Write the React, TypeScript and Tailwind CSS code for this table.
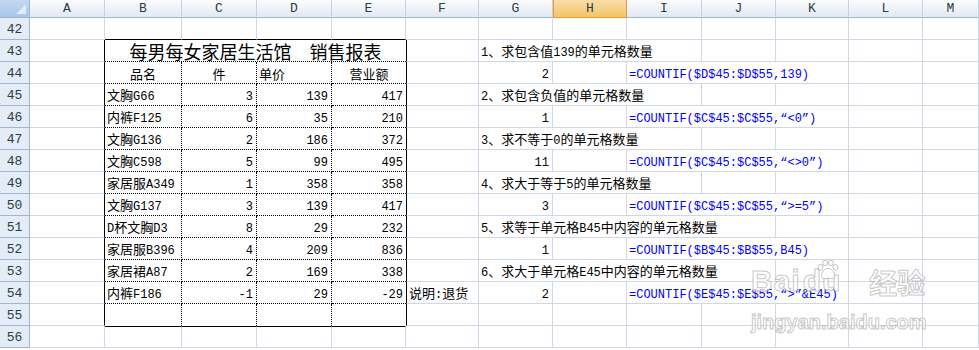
import React from "react";

const GRID =
  "grid grid-cols-[30px_75px_77px_75px_75px_74px_73px_74px_74px_75px_74px_73px_74px_1fr]";
const COLS = ["A", "B", "C", "D", "E", "F", "G", "H", "I", "J", "K", "L", "M"];
const LINE = "border-r border-b border-[#d0d7e5]";

const PRODUCTS = [
  ["文胸G66", "3", "139", "417"],
  ["内裤F125", "6", "35", "210"],
  ["文胸G136", "2", "186", "372"],
  ["文胸C598", "5", "99", "495"],
  ["家居服A349", "1", "358", "358"],
  ["文胸G137", "3", "139", "417"],
  ["D杯文胸D3", "8", "29", "232"],
  ["家居服B396", "4", "209", "836"],
  ["家居裙A87", "2", "169", "338"],
  ["内裤F186", "-1", "29", "-29"],
];

const QUESTIONS: [string, number, string, string][] = [
  ["1、求包含值139的单元格数量", 3, "2", "=COUNTIF($D$45:$D$55,139)"],
  ["2、求包含负值的单元格数量", 3, "1", "=COUNTIF($C$45:$C$55,“<0”)"],
  ["3、求不等于0的单元格数量", 3, "11", "=COUNTIF($C$45:$C$55,“<>0”)"],
  ["4、求大于等于5的单元格数量", 3, "3", "=COUNTIF($C$45:$C$55,“>=5”)"],
  ["5、求等于单元格B45中内容的单元格数量", 4, "1", "=COUNTIF($B$45:$B$55,B45)"],
  ["6、求大于单元格E45中内容的单元格数量", 4, "2", "=COUNTIF($E$45:$E$55,“>”&E45)"],
];

// latin runs get the narrow mono face, CJK stays on Noto
function Txt({ s }: { s: string }) {
  const parts = s.split(/([\x20-\x7e\u201c\u201d]+)/).filter(Boolean);
  return (
    <span>
      {parts.map((p, i) =>
        /^[\x20-\x7e\u201c\u201d]+$/.test(p) ? (
          <span key={i} className="font-['Liberation_Mono',monospace] text-[12px]">
            {p}
          </span>
        ) : (
          <span key={i}>{p}</span>
        )
      )}
    </span>
  );
}

type CellProps = {
  text?: string;
  align?: "l" | "r" | "c";
  border?: string;
  span?: 3 | 4;
  blue?: boolean;
};

function Cell({ text, align = "l", border = LINE, span, blue }: CellProps) {
  const justify =
    align === "r" ? "justify-end pr-[3px]" : align === "c" ? "justify-center" : "justify-start pl-[2px]";
  const spanCls = span === 3 ? "col-span-3" : span === 4 ? "col-span-4" : "";
  return (
    <div
      className={`flex h-[22px] items-center whitespace-nowrap pt-[2px] ${justify} ${spanCls} ${border} ${
        blue ? "text-[#0000ff]" : "text-black"
      }`}
    >
      {text && <Txt s={text} />}
    </div>
  );
}

function RowHead({ n }: { n: number }) {
  return (
    <div className="flex h-[22px] items-center justify-center border-r border-b border-[#9eb6ce] bg-[#e4ecf7] pt-[2px] font-['Liberation_Mono',monospace] text-[13px] text-[#27413e]">
      {n}
    </div>
  );
}

function Empties({ count }: { count: number }) {
  return (
    <>
      {Array.from({ length: count }).map((_, i) => (
        <Cell key={i} />
      ))}
    </>
  );
}

const A_EDGE = "border-r border-b border-r-black border-b-[#d0d7e5]";
const F_EDGE = "border-l border-r border-b border-l-black border-r-[#d0d7e5] border-b-[#d0d7e5]";
const DOT_RB = "border-r border-b border-dotted border-black";
const DOT_B = "border-b border-dotted border-black";
const WM = "text-white/75 [-webkit-text-stroke:1px_rgba(150,150,150,0.55)]";

function RightSide({ row }: { row: number }) {
  // row 43..54 → question / answer pairs
  const q = QUESTIONS[Math.floor((row - 43) / 2)];
  if (!q) return <Empties count={7} />;
  if ((row - 43) % 2 === 0) {
    return (
      <>
        <Cell text={q[0]} span={q[1] as 3 | 4} />
        <Empties count={q[1] === 3 ? 4 : 3} />
      </>
    );
  }
  return (
    <>
      <Cell text={q[2]} align="r" />
      <Cell />
      <Cell text={q[3]} span={3} blue />
      <Empties count={2} />
    </>
  );
}

export default function App() {
  const rows = Array.from({ length: 15 }, (_, i) => 42 + i);

  return (
    <div className="relative h-[350px] w-[979px] overflow-hidden bg-white font-['Noto_Sans_CJK_SC',sans-serif] text-[13px] leading-none">
      {/* column headers */}
      <div className={`${GRID} h-[18px]`}>
        <div className="relative border-r border-b border-[#9eb6ce] bg-linear-to-b from-[#c4d8f2] to-[#a9c4e9]">
          <div className="absolute right-[3px] bottom-[3px] h-0 w-0 border-l-[10px] border-l-transparent [border-bottom:10px_solid_#e6ecf3]" />
        </div>
        {COLS.map((c) =>
          c === "H" ? (
            <div
              key={c}
              className="flex items-center justify-center border-x border-b border-[#f29536] bg-linear-to-b from-[#f9dca8] to-[#f2c566] font-['Liberation_Mono',monospace] text-[13px] text-[#27413e]"
            >
              {c}
            </div>
          ) : (
            <div
              key={c}
              className="flex items-center justify-center border-r border-b border-r-[#c5d2e3] border-b-[#9eb6ce] bg-linear-to-b from-[#fafcfe] to-[#e2e9f3] font-['Liberation_Mono',monospace] text-[13px] text-[#27413e]"
            >
              {c}
            </div>
          )
        )}
      </div>

      {rows.map((r) => (
        <div key={r} className={GRID}>
          <RowHead n={r} />
          {r === 42 || r === 56 ? (
            <>
              <Cell />
              {[0, 1, 2, 3].map((k) => (
                <Cell
                  key={k}
                  border={
                    r === 42
                      ? "border-r border-b border-r-[#d0d7e5] border-b-black"
                      : "border-t border-r border-b border-t-black border-r-[#d0d7e5] border-b-[#d0d7e5]"
                  }
                />
              ))}
              <Empties count={8} />
            </>
          ) : r === 43 ? (
            <>
              <Cell border={A_EDGE} />
              <div className={`col-span-4 flex h-[22px] items-center justify-center whitespace-nowrap pt-[1px] text-[18px] ${DOT_B}`}>
                每男每女家居生活馆　销售报表
              </div>
              <Cell border={F_EDGE} />
              <RightSide row={r} />
            </>
          ) : r === 44 ? (
            <>
              <Cell border={A_EDGE} />
              <Cell text="品名" align="c" border={DOT_RB} />
              <Cell text="件" align="c" border={DOT_RB} />
              <Cell text="单价" border={DOT_RB} />
              <Cell text="营业额" align="c" border={DOT_B} />
              <Cell border={F_EDGE} />
              <RightSide row={r} />
            </>
          ) : r === 55 ? (
            <>
              <Cell border={A_EDGE} />
              <Cell border="border-r border-dotted border-black" />
              <Cell border="border-r border-dotted border-black" />
              <Cell border="border-r border-dotted border-black" />
              <Cell border="" />
              <Cell border={F_EDGE} />
              <Empties count={7} />
            </>
          ) : (
            <>
              <Cell border={A_EDGE} />
              <Cell text={PRODUCTS[r - 45][0]} border={DOT_RB} />
              <Cell text={PRODUCTS[r - 45][1]} align="r" border={DOT_RB} />
              <Cell text={PRODUCTS[r - 45][2]} align="r" border={DOT_RB} />
              <Cell text={PRODUCTS[r - 45][3]} align="r" border={DOT_B} />
              <Cell text={r === 54 ? "说明:退货" : undefined} border={F_EDGE} />
              <RightSide row={r} />
            </>
          )}
        </div>
      ))}

      {/* baidu jingyan watermark */}
      <div className="pointer-events-none absolute top-[266px] left-[751px] select-none">
        <div className="flex items-end">
          <div className={`relative font-['Liberation_Sans',sans-serif] text-[30px] font-bold leading-none tracking-[1px] ${WM}`}>
            <span>Bai</span>
            <span className="ml-[2px]">du</span>
            <svg
              className="absolute top-[-6px] left-[64px] h-[20px] w-[26px]"
              viewBox="0 0 30 24"
              fill="rgba(255,255,255,0.8)"
              stroke="rgba(150,150,150,0.55)"
              strokeWidth="1.2"
            >
              <ellipse cx="6" cy="9" rx="3" ry="3.6" />
              <ellipse cx="11.5" cy="3.6" rx="3" ry="3.3" />
              <ellipse cx="18.5" cy="3.6" rx="3" ry="3.3" />
              <ellipse cx="24" cy="9" rx="3" ry="3.6" />
              <path d="M15 10 C11 10 7 15 7 19 C7 22 10 23 15 22 C20 23 23 22 23 19 C23 15 19 10 15 10 Z" />
            </svg>
          </div>
          <span className={`ml-[28px] text-[28px] font-bold leading-none ${WM}`}>经验</span>
        </div>
        <div className={`mt-[16px] font-['Liberation_Sans',sans-serif] text-[20px] font-bold leading-none ${WM}`}>
          jingyan.baidu.com
        </div>
      </div>
    </div>
  );
}
